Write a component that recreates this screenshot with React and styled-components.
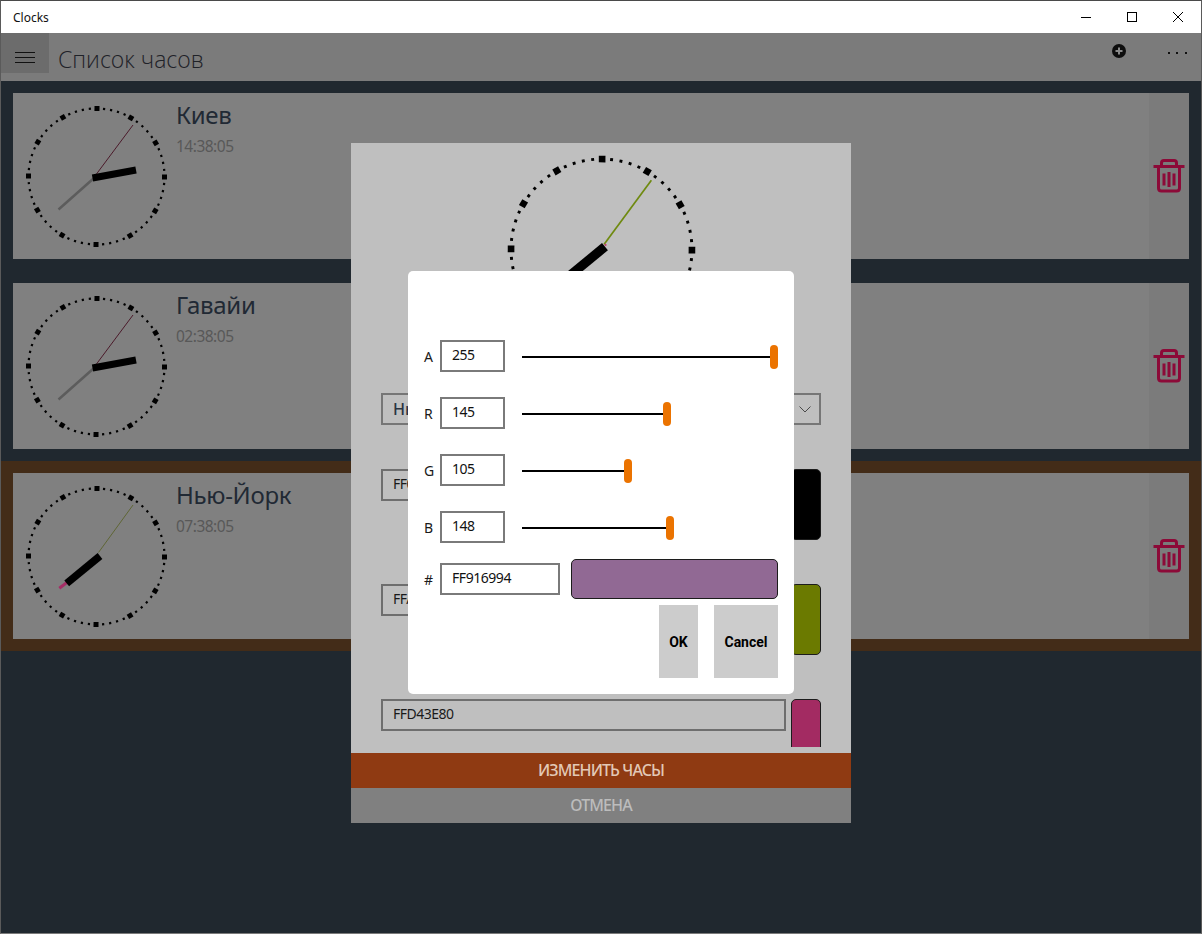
import styled, { createGlobalStyle } from "styled-components";

const GlobalStyle = createGlobalStyle`
  html, body {
    margin: 0;
    height: 100%;
    overflow: hidden;
    background: #20282f;
    font-family: "Noto Sans", "Open Sans", sans-serif;
  }
`;

const Page = styled.div`
  position: relative;
  width: 1202px;
  height: 934px;
  box-sizing: border-box;
  border-top: 1px solid #4a4a4a;
  border-left: 1px solid #5a5a5a;
  border-right: 1px solid #5a5a5a;
  border-bottom: 1px solid #7a7a7a;
  overflow: hidden;
  background: #20282f;
`;

const TitleBar = styled.div`
  display: flex;
  align-items: center;
  height: 32px;
  background: #fff;
  padding-left: 12px;
  font-size: 12px;
  color: #111;
`;

const TitleText = styled.span`
  flex: 1;
`;

const WindowButton = styled.div`
  display: flex;
  align-items: center;
  justify-content: center;
  width: 46px;
  height: 32px;
`;

const AppBar = styled.div`
  display: flex;
  height: 48px;
  background: #7b7b7b;
`;

const MenuButton = styled.div`
  display: flex;
  flex-direction: column;
  gap: 4px;
  align-items: center;
  justify-content: center;
  box-sizing: border-box;
  width: 48px;
  height: 40px;
  padding-top: 8px;
  background: #6c6c6c;
`;

const MenuLine = styled.span`
  display: block;
  width: 20px;
  height: 1px;
  background: #111;
`;

const PageTitle = styled.h1`
  flex: 1;
  margin: 8px 0 0 9px;
  font-family: "Open Sans", sans-serif;
  font-size: 23px;
  line-height: 36px;
  font-weight: 300;
  color: #1f2228;
`;

const AddButton = styled.div`
  display: flex;
  justify-content: center;
  width: 46px;
  margin-right: 11px;
  padding-top: 11px;
`;

const MoreButton = styled.div`
  display: flex;
  justify-content: center;
  gap: 6.5px;
  width: 48px;
  padding-top: 19px;
`;

const MoreDot = styled.span`
  width: 2px;
  height: 2px;
  background: #111;
`;

const ClockRow = styled.div`
  padding: 12px;
  background: ${({ $selected }) => ($selected ? "#432c18" : "transparent")};
`;

const Card = styled.div`
  display: flex;
  height: 166px;
  background: #808080;
`;

const CardInfo = styled.div`
  flex: 1;
  padding: 6px 0 0 4px;
`;

const CityName = styled.div`
  margin-left: -1px;
  font-size: 24px;
  line-height: 32px;
  font-weight: 400;
  letter-spacing: -0.3px;
  color: #212934;
`;

const CityTime = styled.div`
  margin-top: 4px;
  margin-left: -1px;
  font-size: 15.5px;
  line-height: 22px;
  letter-spacing: -0.5px;
  color: #585858;
`;

const DeleteStrip = styled.div`
  display: flex;
  align-items: center;
  justify-content: center;
  width: 40px;
  background: #7b7b7b;
`;

const Modal = styled.div`
  position: absolute;
  left: 350px;
  top: 142px;
  width: 500px;
  height: 680px;
  display: flex;
  flex-direction: column;
  background: #bfbfbf;
`;

const ModalScroll = styled.div`
  height: 604px;
  margin-bottom: 6px;
  overflow: hidden;
`;

const ModalFields = styled.div`
  display: flex;
  flex-direction: column;
  gap: 44px;
  padding: 0 30px;
`;

const CityDropdown = styled.div`
  display: flex;
  align-items: center;
  justify-content: space-between;
  box-sizing: border-box;
  height: 32px;
  padding: 0 8px 0 10px;
  border: 2px solid #767676;
  font-size: 16px;
  font-weight: 500;
  color: #2a3442;
`;

const ColorRow = styled.div`
  display: flex;
  gap: 5px;
`;

const ColorInput = styled.div`
  box-sizing: border-box;
  width: 405px;
  height: 32px;
  padding: 0 10px;
  border: 2px solid #6e6e6e;
  font-size: 14px;
  line-height: 26px;
  letter-spacing: -0.5px;
  color: #1a1a1a;
`;

const ColorSwatch = styled.div`
  box-sizing: border-box;
  width: 30px;
  height: 71px;
  border: 1px solid #1c1c1c;
  border-radius: 5px;
  background: ${({ $color }) => $color};
`;

const ModalAction = styled.div`
  height: 35px;
  text-align: center;
  font-size: 16px;
  font-weight: 500;
  line-height: 35px;
  letter-spacing: -0.9px;
  background: ${({ $primary }) => ($primary ? "#8f3a12" : "#808080")};
  color: ${({ $primary }) => ($primary ? "#e2c8b6" : "#bcbcbc")};
`;

const Picker = styled.div`
  position: absolute;
  left: 407px;
  top: 270px;
  width: 386px;
  height: 423px;
  box-sizing: border-box;
  padding: 69px 16px 16px;
  display: flex;
  flex-direction: column;
  background: #fff;
  border-radius: 5px;
`;

const PickerRow = styled.div`
  display: flex;
  align-items: center;
  height: 32px;
  margin-bottom: 25px;
`;

const PickerHexRow = styled.div`
  display: flex;
  align-items: center;
  height: 40px;
  margin-top: -9px;
`;

const PickerLabel = styled.span`
  width: 16px;
  font-size: 14px;
  color: #1a1a1a;
`;

const PickerInput = styled.div`
  box-sizing: border-box;
  width: ${({ $wide }) => ($wide ? "120px" : "65px")};
  height: 32px;
  padding: 0 10px;
  border: 2px solid #7a7a7a;
  font-size: 14px;
  line-height: 26px;
  letter-spacing: -0.45px;
  color: #111;
`;

const Slider = styled.div`
  flex: 1;
  display: flex;
  align-items: center;
  margin-left: 17px;
  padding-top: 2px;
`;

const SliderTrack = styled.div`
  height: 2px;
  background: #000;
`;

const SliderThumb = styled.div`
  flex: none;
  width: 8px;
  height: 24px;
  border-radius: 4px;
  background: #eb7300;
`;

const ColorPreview = styled.div`
  flex: 1;
  box-sizing: border-box;
  height: 40px;
  margin-left: 11px;
  border: 1px solid #1c1c1c;
  border-radius: 5px;
  background: #916994;
`;

const PickerActions = styled.div`
  display: flex;
  justify-content: flex-end;
  gap: 16px;
  margin-top: 6px;
`;

const PickerButton = styled.div`
  display: flex;
  align-items: center;
  justify-content: center;
  width: ${({ $w }) => $w}px;
  height: 73px;
  background: #cccccc;
  font-family: Roboto, sans-serif;
  font-size: 14px;
  font-weight: 700;
  color: #000;
`;

const ClockSvg = styled.svg`
  display: block;
  flex: none;
`;

const TICKS = Array.from({ length: 60 }, (_, i) => i * 6);

// hand positions are taken relative to the clock centre, at the list size
const Clock = ({ width, height, viewBox, scale = 1, hands }) => (
  <ClockSvg width={width} height={height} viewBox={viewBox}>
    <g transform={`scale(${scale}) rotate(0.4)`}>
      {TICKS.map((a) => {
        const s = a % 30 === 0 ? 5 : 2.2;
        return (
          <rect
            key={a}
            x={-s / 2}
            y={-68 - s / 2}
            width={s}
            height={s}
            fill="#000"
            transform={`rotate(${a})`}
          />
        );
      })}
    </g>
    <g transform={`scale(${scale})`}>
      {hands.map((h, i) => (
        <line
          key={i}
          x1={h[0]}
          y1={h[1]}
          x2={h[2]}
          y2={h[3]}
          stroke={h[4]}
          strokeWidth={h[5]}
        />
      ))}
    </g>
  </ClockSvg>
);

const listHands = [
  [-3, 1.5, 36.5, -51.5, "#4b1a2a", 1],
  [-3, 2, -38, 33, "#5c5c5c", 2.5],
  [-4, 1.5, 39.5, -6.5, "#000", 7],
];

const nyHands = [
  [2, -4, 36.5, -51.5, "#5f6635", 1],
  [-25, 22.5, -37.2, 31.8, "#a52d66", 3],
  [3.5, -0.5, -29.8, 26.8, "#000", 7.5],
];

const modalHands = [
  [2, -4, 37.5, -52, "#6f8a10", 1.3],
  [2.5, -3, 3.5, -4, "#c0406a", 1.5],
  [2.6, -2.1, -29.8, 24.5, "#000", 7],
];

const clocks = [
  { name: "Киев", time: "14:38:05", hands: listHands },
  { name: "Гавайи", time: "02:38:05", hands: listHands },
  { name: "Нью-Йорк", time: "07:38:05", hands: nyHands, selected: true },
];

const channels = [
  ["A", 255],
  ["R", 145],
  ["G", 105],
  ["B", 148],
];

const TrashIcon = () => (
  <svg width="32" height="34" viewBox="0 0 32 34" fill="none" stroke="#8c0a38" strokeWidth="3">
    <path d="M0.5 7.5H31.5" />
    <path d="M8.5 7V4Q8.5 1.5 11 1.5H21Q23.5 1.5 23.5 4V7" />
    <path d="M5.5 7.5V29Q5.5 32 8.5 32H23.5Q26.5 32 26.5 29V7.5" />
    <path d="M11 14.5V26.5M16 13V28M21 14.5V26.5" />
  </svg>
);

const MinimizeIcon = () => (
  <svg width="10" height="10" viewBox="0 0 10 10">
    <path d="M0 5.5H10" stroke="#000" />
  </svg>
);

const MaximizeIcon = () => (
  <svg width="10" height="10" viewBox="0 0 10 10" fill="none">
    <rect x="0.5" y="0.5" width="9" height="9" stroke="#000" />
  </svg>
);

const CloseIcon = () => (
  <svg width="10" height="10" viewBox="0 0 10 10">
    <path d="M0 0L10 10M10 0L0 10" stroke="#000" />
  </svg>
);

const AddIcon = () => (
  <svg width="14" height="14" viewBox="0 0 14 14">
    <circle cx="7" cy="7" r="7" fill="#0d0d0d" />
    <path d="M7 3.5V10.5M3.5 7H10.5" stroke="#8a8a8a" strokeWidth="2" />
  </svg>
);

const ChevronIcon = () => (
  <svg width="12" height="7" viewBox="0 0 12 7" fill="none">
    <path d="M0.5 0.5L6 6L11.5 0.5" stroke="#4a4a4a" />
  </svg>
);

export default function App() {
  return (
    <>
      <GlobalStyle />
      <Page>
        <TitleBar>
          <TitleText>Clocks</TitleText>
          <WindowButton>
            <MinimizeIcon />
          </WindowButton>
          <WindowButton>
            <MaximizeIcon />
          </WindowButton>
          <WindowButton>
            <CloseIcon />
          </WindowButton>
        </TitleBar>
        <AppBar>
          <MenuButton>
            <MenuLine />
            <MenuLine />
            <MenuLine />
          </MenuButton>
          <PageTitle>Список часов</PageTitle>
          <AddButton>
            <AddIcon />
          </AddButton>
          <MoreButton>
            <MoreDot />
            <MoreDot />
            <MoreDot />
          </MoreButton>
        </AppBar>
        {clocks.map((c) => (
          <ClockRow key={c.name} $selected={c.selected}>
            <Card>
              <Clock width={160} height={166} viewBox="-83.5 -83.5 160 166" hands={c.hands} />
              <CardInfo>
                <CityName>{c.name}</CityName>
                <CityTime>{c.time}</CityTime>
              </CardInfo>
              <DeleteStrip>
                <TrashIcon />
              </DeleteStrip>
            </Card>
          </ClockRow>
        ))}
        <Modal>
          <ModalScroll>
            <Clock
              width={500}
              height={250}
              viewBox="-250.5 -106.5 500 250"
              scale={1.33}
              hands={modalHands}
            />
            <ModalFields>
              <CityDropdown>
                Нью-Йорк
                <ChevronIcon />
              </CityDropdown>
              <ColorRow>
                <ColorInput>FF000000</ColorInput>
                <ColorSwatch $color="#000" />
              </ColorRow>
              <ColorRow>
                <ColorInput>FFA4C400</ColorInput>
                <ColorSwatch $color="#6b7a00" />
              </ColorRow>
              <ColorRow>
                <ColorInput>FFD43E80</ColorInput>
                <ColorSwatch $color="#a32b62" />
              </ColorRow>
            </ModalFields>
          </ModalScroll>
          <ModalAction $primary>ИЗМЕНИТЬ ЧАСЫ</ModalAction>
          <ModalAction>ОТМЕНА</ModalAction>
        </Modal>
        <Picker>
          {channels.map(([label, value]) => (
            <PickerRow key={label}>
              <PickerLabel>{label}</PickerLabel>
              <PickerInput>{value}</PickerInput>
              <Slider>
                <SliderTrack style={{ width: `${(value / 255) * 248}px` }} />
                <SliderThumb />
              </Slider>
            </PickerRow>
          ))}
          <PickerHexRow>
            <PickerLabel>#</PickerLabel>
            <PickerInput $wide>FF916994</PickerInput>
            <ColorPreview />
          </PickerHexRow>
          <PickerActions>
            <PickerButton $w={39}>OK</PickerButton>
            <PickerButton $w={64}>Cancel</PickerButton>
          </PickerActions>
        </Picker>
      </Page>
    </>
  );
}
